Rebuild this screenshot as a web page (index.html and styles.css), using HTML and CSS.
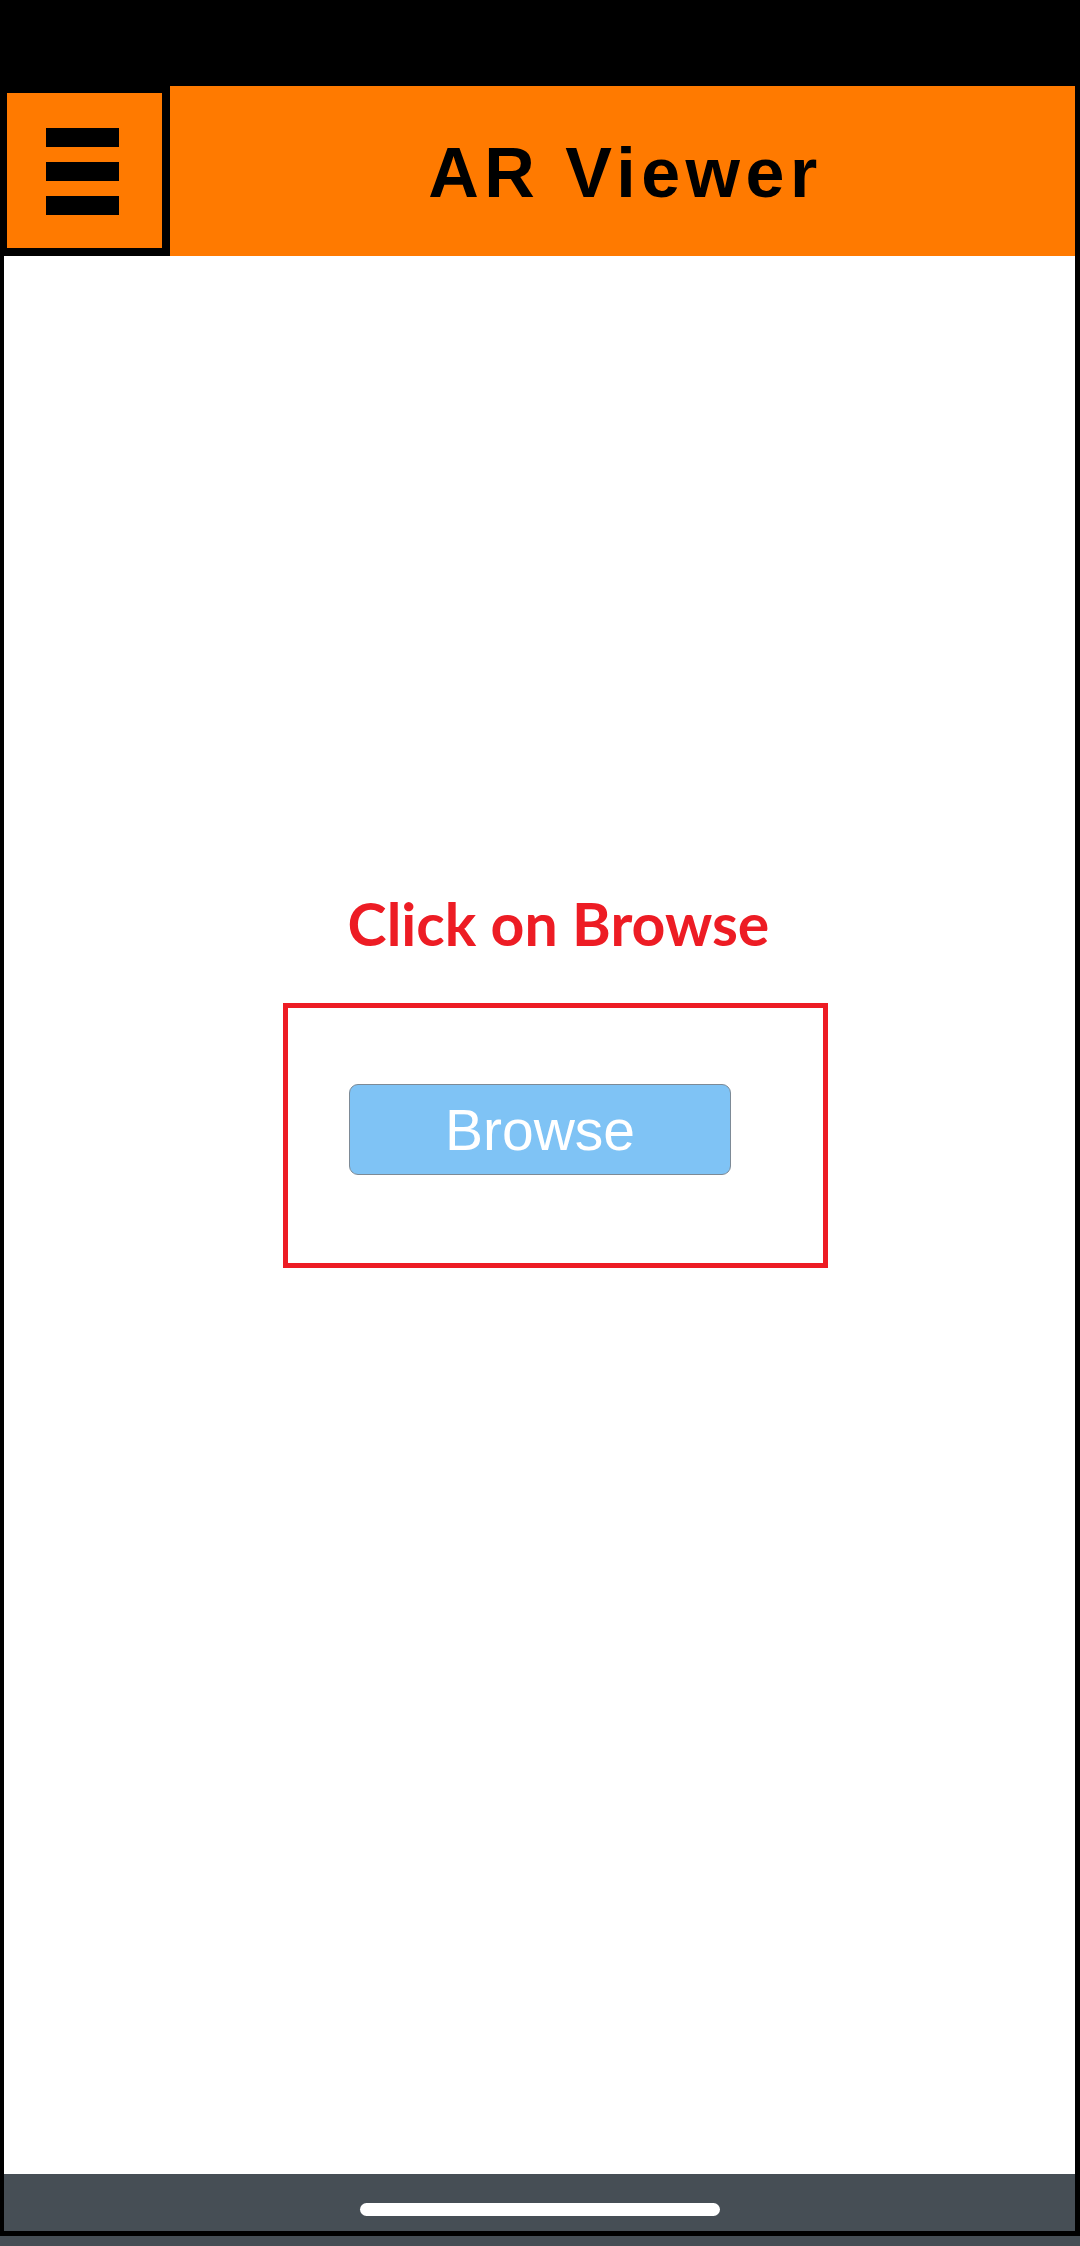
FILE: index.html
```html
<!DOCTYPE html>
<html lang="en">
<head>
<meta charset="utf-8">
<title>AR Viewer</title>
<link rel="stylesheet" href="styles.css">
</head>
<body>
<div class="screen">
  <div class="status"></div>
  <header class="header">
    <div class="menu">
      <span class="bar"></span>
      <span class="bar"></span>
      <span class="bar"></span>
    </div>
    <div class="title">AR Viewer</div>
  </header>
  <main class="main">
    <h1 class="hint">Click on Browse</h1>
    <div class="highlight">
      <button class="browse" type="button">Browse</button>
    </div>
  </main>
  <div class="navbar"><span class="pill"></span></div>
  <div class="navline"></div>
  <div class="navtail"></div>
</div>
</body>
</html>
```

FILE: styles.css
```css
html, body {
  margin: 0;
  padding: 0;
  background: #000;
}

.screen {
  width: 1080px;
  height: 2246px;
  display: flex;
  flex-direction: column;
  overflow: hidden;
  background: #000;
}

.status {
  height: 86px;
  flex: none;
}

.header {
  height: 170px;
  flex: none;
  display: flex;
  margin-right: 5px;
}

.menu {
  width: 170px;
  box-sizing: border-box;
  border-style: solid;
  border-color: #000;
  border-width: 7px 8px 8px 7px;
  background: #ff7a00;
  padding: 35px 0 0 39px;
  display: flex;
  flex-direction: column;
  gap: 15px;
}

.bar {
  display: block;
  width: 73px;
  height: 19px;
  background: #000;
}

.title {
  flex: 1;
  background: #ff7a00;
  display: flex;
  align-items: center;
  justify-content: center;
  padding-top: 4px;
  padding-left: 6px;
  box-sizing: border-box;
  font-family: "Liberation Sans", Arial, sans-serif;
  font-weight: 700;
  font-size: 70px;
  letter-spacing: 5.5px;
  color: #000;
}

.main {
  flex: 1;
  background: #fff;
  margin: 0 5px 0 4px;
  display: flex;
  flex-direction: column;
  align-items: flex-start;
}

.hint {
  margin: 632px 0 0 0;
  align-self: center;
  padding-left: 38px;
  font-family: Lato, "Open Sans", sans-serif;
  font-weight: 700;
  font-size: 59px;
  line-height: 72px;
  color: #ed1c24;
}

.highlight {
  margin: 43px 0 0 279px;
  width: 545px;
  height: 265px;
  box-sizing: border-box;
  border: 5px solid #ed1c24;
  padding: 76px 0 0 61px;
}

.browse {
  display: block;
  width: 382px;
  height: 91px;
  box-sizing: border-box;
  margin: 0;
  padding: 2px 0 0 0;
  background: #7fc3f5;
  border: 1.5px solid #7d8a96;
  border-radius: 9px;
  color: #fff;
  font-family: "Liberation Sans", Arial, sans-serif;
  font-size: 57px;
  font-weight: 400;
  line-height: 1;
}

.navbar {
  height: 57px;
  flex: none;
  margin: 0 5px 0 4px;
  background: #464e55;
  display: flex;
  justify-content: center;
  padding-top: 29px;
  box-sizing: border-box;
}

.pill {
  display: block;
  width: 360px;
  height: 13px;
  border-radius: 7px;
  background: #fff;
}

.navline {
  height: 5px;
  flex: none;
  background: #000;
}

.navtail {
  height: 10px;
  flex: none;
  background: #464e55;
}
```
